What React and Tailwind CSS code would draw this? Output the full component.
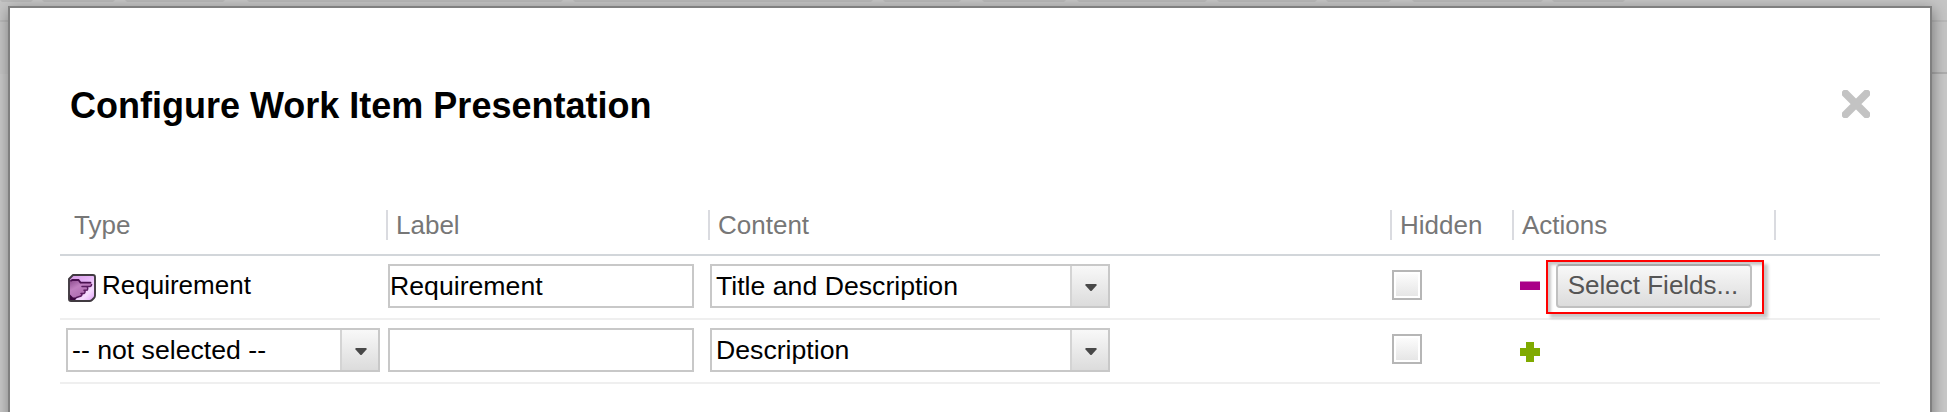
import React from "react";

const TABS = [
  [0, 33], [42, 115], [125, 225], [247, 563], [573, 873], [883, 961],
  [982, 1066], [1077, 1207], [1217, 1317], [1326, 1391], [1412, 1543], [1552, 1625],
];

const GRID = "grid grid-cols-[328px_322px_682px_122px_262px_104px]";

function Backdrop() {
  return (
    <svg className="absolute inset-0 h-full w-full" viewBox="0 0 1947 412" aria-hidden="true">
      <rect width="1947" height="412" fill="#c9c9c9" />
      <rect width="1947" height="74" fill="#c5c5c5" />
      <rect y="20" width="1947" height="2" fill="#b9b9b9" />
      <rect x="1900" y="72" width="47" height="2" fill="#aeaeae" />
      {TABS.map(([a, b]) => (
        <path key={a} d={`M${a} 0H${b}L${b - 2} 2H${a + 2}Z`} fill="#b8b8b8" />
      ))}
    </svg>
  );
}

function RequirementIcon() {
  return (
    <svg width="30" height="30" viewBox="0 0 30 30" className="block" aria-hidden="true">
      <defs>
        <linearGradient id="req-bg" x1="0" y1="0" x2="1" y2="1">
          <stop offset="0" stopColor="#d59ae4" />
          <stop offset="0.45" stopColor="#e6b4f6" />
          <stop offset="0.72" stopColor="#f6dcff" />
          <stop offset="1" stopColor="#dd98f5" />
        </linearGradient>
        <linearGradient id="req-hand" x1="0" y1="0" x2="0.6" y2="1">
          <stop offset="0" stopColor="#8a4a8c" />
          <stop offset="0.4" stopColor="#c080c0" />
          <stop offset="1" stopColor="#a862aa" />
        </linearGradient>
      </defs>
      <path
        d="M6 2H26Q28 2 28 4V22.500Q28 24 27 25L25 27Q24 28 22.500 28H4Q2 28 2 26V6Z"
        fill="url(#req-bg)"
      />
      <path
        d="M2.500 8.500L5 7H11.500L13.500 9.500H23Q24.600 9.800 24.600 11.500Q24.500 13.200 22.500 13.500H19.500Q21.500 14.500 20.300 17Q19.500 18 18 18Q18.500 20.500 15.500 21Q15 23.500 12.500 23.500Q10.500 24 9 25L7 27.500H2.500Z"
        fill="url(#req-hand)"
      />
      <path
        d="M4 7.600L5.500 7H11.500L13.500 9.600H23.500"
        fill="none"
        stroke="#4a1050"
        strokeWidth="1.800"
        strokeLinecap="round"
      />
      <path
        d="M15 13.600H23Q24.600 13 24.600 11.500M19.500 13.600Q21.500 14.500 20.300 17L17 17.200M18 18Q18.500 20.500 15.500 20.600H14M15 21Q15 23.300 12.500 23.500L9.500 24.500"
        fill="none"
        stroke="#5a1c60"
        strokeWidth="1.500"
        strokeLinecap="round"
      />
      <path d="M2.500 21L6 24.500L10 24.500L7.500 28H2.500Z" fill="#3d0640" />
      <path
        d="M6 2H26Q28 2 28 4V22.500Q28 24 27 25L25 27Q24 28 22.500 28H4Q2 28 2 26V6Z"
        fill="none"
        stroke="#403a40"
        strokeWidth="1.900"
        strokeLinejoin="round"
      />
    </svg>
  );
}

function SelectBox({ value, className }) {
  return (
    <div className={`flex h-11 border-2 border-[#c8c8c8] bg-white ${className}`}>
      <span className="flex-1 whitespace-pre pl-1 text-[26.67px] leading-10 text-black">{value}</span>
      <span className="flex w-[38px] items-center justify-center border-l-2 border-[#d4d4d4] bg-linear-to-b from-[#f8f8f8] to-[#dcdcdc] pt-[3px]">
        <svg width="12" height="7" viewBox="0 0 12 7" className="ml-[2px]" aria-hidden="true">
          <path d="M0.500 0H11.500V1.500L6.500 7H5.500L0.500 1.500Z" fill="#484848" />
        </svg>
      </span>
    </div>
  );
}

function LabelInput({ value }) {
  return (
    <input
      type="text"
      defaultValue={value}
      aria-label="Label"
      className="block h-11 w-[306px] border-2 border-[#c8c8c8] bg-white p-0 text-[26.67px] leading-10 text-black outline-none"
    />
  );
}

function Checkbox() {
  return (
    <div className="mt-[6px] h-[30px] w-[30px] border-2 border-[#b6b6b6] bg-white p-[2px]">
      <div className="h-full w-full bg-linear-to-b from-[#fcfcfc] to-[#e6e6e6]" />
    </div>
  );
}

function Header({ children, first }) {
  return (
    <div
      className={`h-[30px] border-r-2 border-[#dadbe0] text-[26px] leading-[30px] text-[#777777] ${first ? "pl-[14px]" : "pl-2"}`}
    >
      {children}
    </div>
  );
}

export default function App() {
  return (
    <div className="relative h-[412px] w-[1947px] overflow-hidden font-['Liberation_Sans',Arial,sans-serif]">
      <Backdrop />
      <div className="relative ml-2 w-[1924px] pt-[6px]">
        <main className="h-[480px] border-2 border-[#808080] bg-white shadow-[1px_4px_14px_rgba(0,0,0,0.4)]">
          <header className="flex justify-between pl-[60px] pr-[60px] pt-[76px]">
            <h1 className="pt-[2px] text-[36px] font-bold leading-[40px] text-black">Configure Work Item Presentation</h1>
            <button type="button" aria-label="Close" className="mt-[6px] h-7 w-7">
              <svg width="28" height="28" viewBox="0 0 28 28" className="block overflow-hidden">
                <path d="M3.500 3.500L24.500 24.500M24.500 3.500L3.500 24.500" stroke="#c3c3c3" strokeWidth="7.600" strokeLinecap="round" />
              </svg>
            </button>
          </header>

          <section className="ml-[50px] mt-[84px] w-[1820px]">
            <div className={`${GRID} h-[46px] border-b-2 border-[#d2d6da]`}>
              <Header first>Type</Header>
              <Header>Label</Header>
              <Header>Content</Header>
              <Header>Hidden</Header>
              <Header>Actions</Header>
            </div>

            <div className={`${GRID} h-16 border-b-2 border-[#efefef] pt-2`}>
              <div className="flex pl-[7px]">
                <span className="mt-[9px]">
                  <RequirementIcon />
                </span>
                <span className="ml-[5px] mt-[6px] text-[26px] leading-[30px] text-black">Requirement</span>
              </div>
              <LabelInput value="Requirement" />
              <SelectBox value="Title and Description" className="w-[400px]" />
              <Checkbox />
              <div className="flex">
                <svg width="20" height="10" viewBox="0 0 20 10" className="ml-[6px] mt-[17px]" aria-label="Remove">
                  <rect y="0.500" width="20" height="8.500" fill="#aa0088" />
                </svg>
                <div className="-mt-1 ml-[6px] h-[54px] w-[218px] shrink-0 border-2 border-[#ff0000] pl-2 pt-[2px] shadow-[4px_4px_3px_rgba(0,0,0,0.22),inset_3px_3px_3px_rgba(0,0,0,0.22)]">
                  <button
                    type="button"
                    className="block h-11 w-[196px] whitespace-nowrap rounded-[4px] border-2 border-[#c0c0c0] border-t-[#a8a8a8] bg-linear-to-b from-[#f8f8f8] to-[#dcdcdc] pb-[2px] pr-[2px] text-[26px] leading-[38px] text-[#555555]"
                  >
                    Select Fields...
                  </button>
                </div>
              </div>
            </div>

            <div className={`${GRID} h-16 border-b-2 border-[#efefef] pt-2`}>
              <div className="pl-[6px]">
                <SelectBox value="-- not selected --" className="w-[314px]" />
              </div>
              <LabelInput value="" />
              <SelectBox value="Description" className="w-[400px]" />
              <Checkbox />
              <svg width="20" height="20" viewBox="0 0 20 20" className="ml-[6px] mt-[14px]" aria-label="Add">
                <path d="M6 0H14V6H20V14H14V20H6V14H0V6H6Z" fill="#80aa00" />
              </svg>
            </div>
          </section>
        </main>
      </div>
    </div>
  );
}
